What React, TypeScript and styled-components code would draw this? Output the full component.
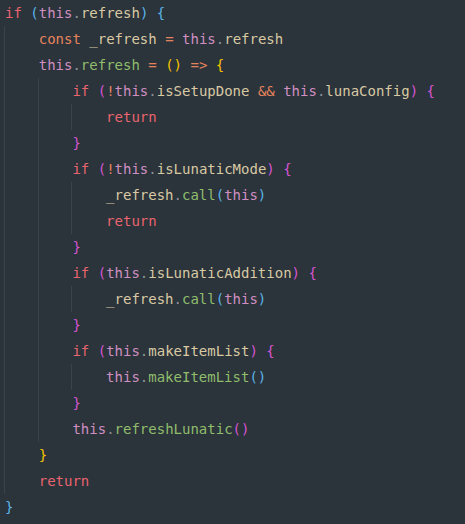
import React from "react";
import styled, { createGlobalStyle } from "styled-components";

const Global = createGlobalStyle`
  html, body { margin: 0; padding: 0; background: #2b333b; }
`;

const Editor = styled.div`
  width: 465px;
  height: 524px;
  box-sizing: border-box;
  padding: 0 0 0 5px;
  background: #2b333b;
  font-family: "DejaVu Sans Mono", "Liberation Mono", monospace;
  font-size: 14px;
  line-height: 26px;
  color: #d8c9a3;
  white-space: pre;
  overflow: hidden;
`;

const Line = styled.div`
  height: 26px;
`;

const Block = styled.div`
  margin-left: -1px;
  border-left: 1px solid #3a434b;
  padding-left: 4ch;
`;

const Kw = styled.span`color: #e8646e;`;
const Decl = styled.span`color: #e5845c;`;
const Op = styled.span`color: #e5845c;`;
const This = styled.span`color: #cf8fc1;`;
const Id = styled.span`color: #d8c9a3;`;
const Dot = styled.span`color: #8a9199;`;
const Fn = styled.span`color: #8fbd6c;`;

const bracketColors = ["#5ab4e5", "#f5c400", "#d455d2"];
const Br = styled.span<{ $level: number }>`
  color: ${(p) => bracketColors[p.$level % 3]};
`;

const T = () => <This>this</This>;
const D = () => <Dot>.</Dot>;

export default function App() {
  return (
    <>
      <Global />
      <Editor>
        <Line>
          <Kw>if</Kw> <Br $level={0}>(</Br><T /><D /><Id>refresh</Id><Br $level={0}>)</Br> <Br $level={0}>{"{"}</Br>
        </Line>
        <Block>
          <Line>
            <Decl>const</Decl> <Id>_refresh</Id> <Op>=</Op> <T /><D /><Id>refresh</Id>
          </Line>
          <Line>
            <T /><D /><Fn>refresh</Fn> <Op>=</Op> <Br $level={1}>()</Br> <Op>=&gt;</Op> <Br $level={1}>{"{"}</Br>
          </Line>
          <Block>
            <Line>
              <Kw>if</Kw> <Br $level={2}>(</Br><Op>!</Op><T /><D /><Id>isSetupDone</Id> <Op>&amp;&amp;</Op> <T /><D /><Id>lunaConfig</Id><Br $level={2}>)</Br> <Br $level={2}>{"{"}</Br>
            </Line>
            <Block>
              <Line><Kw>return</Kw></Line>
            </Block>
            <Line><Br $level={2}>{"}"}</Br></Line>
            <Line>
              <Kw>if</Kw> <Br $level={2}>(</Br><Op>!</Op><T /><D /><Id>isLunaticMode</Id><Br $level={2}>)</Br> <Br $level={2}>{"{"}</Br>
            </Line>
            <Block>
              <Line>
                <Id>_refresh</Id><D /><Fn>call</Fn><Br $level={3}>(</Br><T /><Br $level={3}>)</Br>
              </Line>
              <Line><Kw>return</Kw></Line>
            </Block>
            <Line><Br $level={2}>{"}"}</Br></Line>
            <Line>
              <Kw>if</Kw> <Br $level={2}>(</Br><T /><D /><Id>isLunaticAddition</Id><Br $level={2}>)</Br> <Br $level={2}>{"{"}</Br>
            </Line>
            <Block>
              <Line>
                <Id>_refresh</Id><D /><Fn>call</Fn><Br $level={3}>(</Br><T /><Br $level={3}>)</Br>
              </Line>
            </Block>
            <Line><Br $level={2}>{"}"}</Br></Line>
            <Line>
              <Kw>if</Kw> <Br $level={2}>(</Br><T /><D /><Id>makeItemList</Id><Br $level={2}>)</Br> <Br $level={2}>{"{"}</Br>
            </Line>
            <Block>
              <Line>
                <T /><D /><Fn>makeItemList</Fn><Br $level={3}>()</Br>
              </Line>
            </Block>
            <Line><Br $level={2}>{"}"}</Br></Line>
            <Line>
              <T /><D /><Fn>refreshLunatic</Fn><Br $level={2}>()</Br>
            </Line>
          </Block>
          <Line><Br $level={1}>{"}"}</Br></Line>
          <Line><Kw>return</Kw></Line>
        </Block>
        <Line><Br $level={0}>{"}"}</Br></Line>
      </Editor>
    </>
  );
}
